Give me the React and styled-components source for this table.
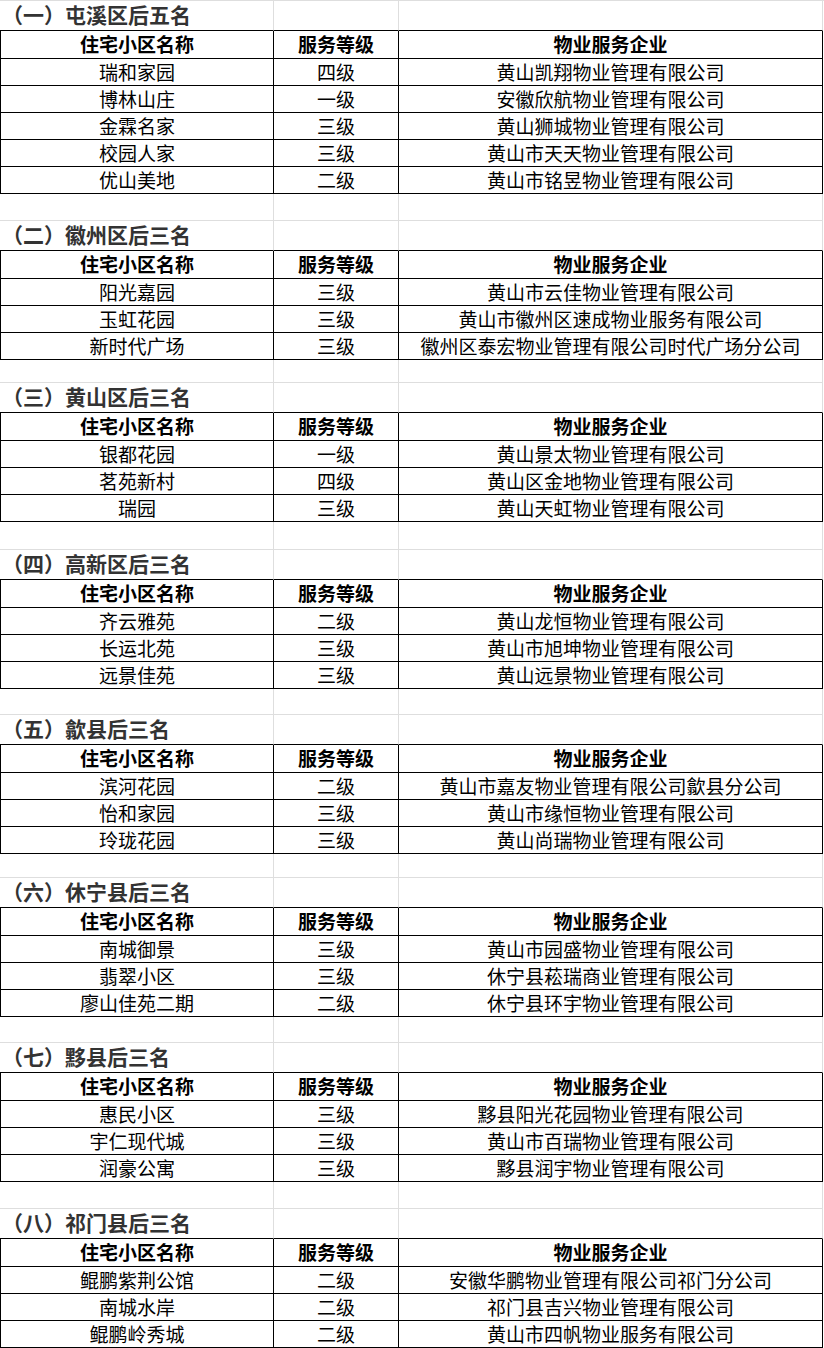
import styled, { createGlobalStyle } from "styled-components";

const sections = [
  {
    title: "（一）屯溪区后五名",
    gap: 27,
    rows: [
      ["瑞和家园", "四级", "黄山凯翔物业管理有限公司"],
      ["博林山庄", "一级", "安徽欣航物业管理有限公司"],
      ["金霖名家", "三级", "黄山狮城物业管理有限公司"],
      ["校园人家", "三级", "黄山市天天物业管理有限公司"],
      ["优山美地", "二级", "黄山市铭昱物业管理有限公司"],
    ],
  },
  {
    title: "（二）徽州区后三名",
    gap: 23,
    rows: [
      ["阳光嘉园", "三级", "黄山市云佳物业管理有限公司"],
      ["玉虹花园", "三级", "黄山市徽州区速成物业服务有限公司"],
      ["新时代广场", "三级", "徽州区泰宏物业管理有限公司时代广场分公司"],
    ],
  },
  {
    title: "（三）黄山区后三名",
    gap: 28,
    rows: [
      ["银都花园", "一级", "黄山景太物业管理有限公司"],
      ["茗苑新村", "四级", "黄山区金地物业管理有限公司"],
      ["瑞园", "三级", "黄山天虹物业管理有限公司"],
    ],
  },
  {
    title: "（四）高新区后三名",
    gap: 26,
    rows: [
      ["齐云雅苑", "二级", "黄山龙恒物业管理有限公司"],
      ["长运北苑", "三级", "黄山市旭坤物业管理有限公司"],
      ["远景佳苑", "三级", "黄山远景物业管理有限公司"],
    ],
  },
  {
    title: "（五）歙县后三名",
    gap: 24,
    rows: [
      ["滨河花园", "二级", "黄山市嘉友物业管理有限公司歙县分公司"],
      ["怡和家园", "三级", "黄山市缘恒物业管理有限公司"],
      ["玲珑花园", "三级", "黄山尚瑞物业管理有限公司"],
    ],
  },
  {
    title: "（六）休宁县后三名",
    gap: 26,
    rows: [
      ["南城御景", "三级", "黄山市园盛物业管理有限公司"],
      ["翡翠小区", "三级", "休宁县菘瑞商业管理有限公司"],
      ["廖山佳苑二期", "二级", "休宁县环宇物业管理有限公司"],
    ],
  },
  {
    title: "（七）黟县后三名",
    gap: 27,
    rows: [
      ["惠民小区", "三级", "黟县阳光花园物业管理有限公司"],
      ["宇仁现代城", "三级", "黄山市百瑞物业管理有限公司"],
      ["润豪公寓", "三级", "黟县润宇物业管理有限公司"],
    ],
  },
  {
    title: "（八）祁门县后三名",
    gap: 0,
    rows: [
      ["鲲鹏紫荆公馆", "二级", "安徽华鹏物业管理有限公司祁门分公司"],
      ["南城水岸", "二级", "祁门县吉兴物业管理有限公司"],
      ["鲲鹏岭秀城", "二级", "黄山市四帆物业服务有限公司"],
    ],
  },
];

const headers = ["住宅小区名称", "服务等级", "物业服务企业"];

const GlobalStyle = createGlobalStyle`
  html, body {
    margin: 0;
    padding: 0;
    background: #fff;
  }
  * {
    box-sizing: border-box;
  }
`;

const Sheet = styled.div`
  width: 824px;
  border-top: 1px solid #dedede;
  font-family: "Noto Sans CJK SC", "Noto Sans", sans-serif;
  color: #000;
`;

const Row = styled.div`
  display: grid;
  grid-template-columns: 274px 125px 424px;
  height: ${(p) => p.$h}px;
`;

const Cell = styled.div`
  display: flex;
  align-items: center;
  justify-content: ${(p) => (p.$left ? "flex-start" : "center")};
  padding: 0 ${(p) => (p.$left ? "2px" : "0")} ${(p) => (p.$left ? "3px" : "2px")};
  border-right: 1px solid ${(p) => (p.$grid ? "#dedede" : "#000")};
  border-bottom: 1px solid ${(p) => (p.$under ? "#000" : p.$grid ? "#dedede" : "#000")};
  border-left: ${(p) => (p.$edge ? "1px solid #000" : "none")};
  font-size: 19px;
  font-weight: ${(p) => (p.$bold ? 700 : 400)};
  white-space: nowrap;
  line-height: 1;
`;

const Title = styled.span`
  font-size: 21px;
  font-weight: 700;
  color: #333;
`;

const Section = ({ title, gap, rows }) => (
  <>
    <Row $h={30}>
      <Cell $grid $under $left>
        <Title>{title}</Title>
      </Cell>
      <Cell $grid $under />
      <Cell $grid $under />
    </Row>
    <Row $h={28}>
      {headers.map((h, i) => (
        <Cell key={h} $bold $edge={i === 0}>
          {h}
        </Cell>
      ))}
    </Row>
    {rows.map((r) => (
      <Row key={r[0]} $h={27}>
        {r.map((t, i) => (
          <Cell key={i} $edge={i === 0}>
            {t}
          </Cell>
        ))}
      </Row>
    ))}
    {gap > 0 && (
      <Row $h={gap}>
        <Cell $grid />
        <Cell $grid />
        <Cell $grid />
      </Row>
    )}
  </>
);

export default function App() {
  return (
    <>
      <GlobalStyle />
      <Sheet>
        {sections.map((s) => (
          <Section key={s.title} {...s} />
        ))}
      </Sheet>
    </>
  );
}
